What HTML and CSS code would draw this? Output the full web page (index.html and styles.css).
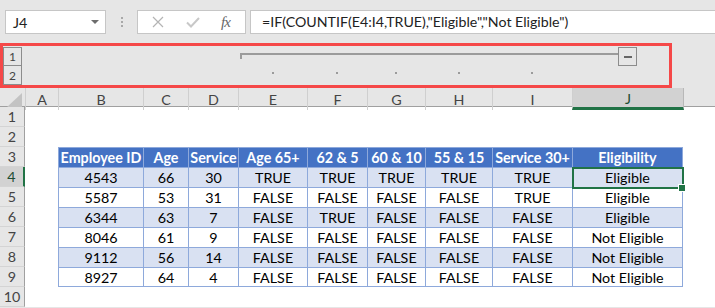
FILE: index.html
```html
<!DOCTYPE html>
<html lang="en">

<head>
    <meta charset="UTF-8" />
    <meta name="viewport" content="width=device-width, initial-scale=1.0" />
    <title>Eligibility - Excel</title>
    <link rel="stylesheet" href="styles.css">
</head>

<body>
    <div class="app">
        <div class="formula-bar">
            <div class="name-box">
                <span>J4</span>
                <svg class="caret" width="8" height="4" viewBox="0 0 8 4">
                    <path d="M0 0 L8 0 L4 4 Z" fill="#6d6d6d" />
                </svg>
            </div>
            <div class="grip"><i></i><i></i><i></i></div>
            <div class="fx-buttons">
                <svg width="12" height="12" viewBox="0 0 12 12">
                    <path d="M1 1 L11 11 M11 1 L1 11" stroke="#b4b4b4" stroke-width="1.2" fill="none" />
                </svg>
                <svg width="14" height="11" viewBox="0 0 14 11">
                    <path d="M1 5.5 L5 9.5 L13 1" stroke="#c8c8c8" stroke-width="2" fill="none" />
                </svg>
                <span class="fx">fx</span>
            </div>
            <div class="formula">=IF(COUNTIF(E4:I4,TRUE),"Eligible","Not Eligible")</div>
        </div>

        <div class="outline">
            <div class="level">1</div>
            <div class="bracket">
                <div class="bracket-line"></div>
                <div class="collapse"><i></i></div>
            </div>
            <div class="level">2</div>
            <div class="dot c-e"></div>
            <div class="dot c-f"></div>
            <div class="dot c-g"></div>
            <div class="dot c-h"></div>
            <div class="dot c-i"></div>
            <div class="annotation"></div>
        </div>

        <div class="sheet">
            <div class="row col-head">
                <div class="corner"><svg width="16" height="15" viewBox="0 0 16 15"><path d="M16 0 L16 15 L0 15 Z" fill="#c3c3c3" /></svg></div>
                <div>A</div><div>B</div><div>C</div><div>D</div><div>E</div>
                <div>F</div><div>G</div><div>H</div><div>I</div><div class="active">J</div><div class="rest"></div>
            </div>

            <div class="row"><div class="rh">1</div></div>
            <div class="row"><div class="rh">2</div></div>

            <div class="row">
                <div class="rh">3</div><div></div>
                <div class="th">Employee ID</div><div class="th">Age</div><div class="th">Service</div>
                <div class="th">Age 65+</div><div class="th">62 &amp; 5</div><div class="th">60 &amp; 10</div>
                <div class="th">55 &amp; 15</div><div class="th">Service 30+</div><div class="th last">Eligibility</div>
            </div>

            <div class="row band">
                <div class="rh active">4</div><div></div>
                <div class="td">4543</div><div class="td">66</div><div class="td">30</div>
                <div class="td">TRUE</div><div class="td">TRUE</div><div class="td">TRUE</div>
                <div class="td">TRUE</div><div class="td">TRUE</div><div class="td last selected">Eligible</div>
            </div>

            <div class="row">
                <div class="rh">5</div><div></div>
                <div class="td">5587</div><div class="td">53</div><div class="td">31</div>
                <div class="td">FALSE</div><div class="td">FALSE</div><div class="td">FALSE</div>
                <div class="td">FALSE</div><div class="td">TRUE</div><div class="td last">Eligible</div>
            </div>

            <div class="row band">
                <div class="rh">6</div><div></div>
                <div class="td">6344</div><div class="td">63</div><div class="td">7</div>
                <div class="td">FALSE</div><div class="td">TRUE</div><div class="td">FALSE</div>
                <div class="td">FALSE</div><div class="td">FALSE</div><div class="td last">Eligible</div>
            </div>

            <div class="row">
                <div class="rh">7</div><div></div>
                <div class="td">8046</div><div class="td">61</div><div class="td">9</div>
                <div class="td">FALSE</div><div class="td">FALSE</div><div class="td">FALSE</div>
                <div class="td">FALSE</div><div class="td">FALSE</div><div class="td last">Not Eligible</div>
            </div>

            <div class="row band">
                <div class="rh">8</div><div></div>
                <div class="td">9112</div><div class="td">56</div><div class="td">14</div>
                <div class="td">FALSE</div><div class="td">FALSE</div><div class="td">FALSE</div>
                <div class="td">FALSE</div><div class="td">FALSE</div><div class="td last">Not Eligible</div>
            </div>

            <div class="row bottom">
                <div class="rh">9</div><div></div>
                <div class="td">8927</div><div class="td">64</div><div class="td">4</div>
                <div class="td">FALSE</div><div class="td">FALSE</div><div class="td">FALSE</div>
                <div class="td">FALSE</div><div class="td">FALSE</div><div class="td last">Not Eligible</div>
            </div>

            <div class="row"><div class="rh">10</div></div>
        </div>
    </div>
</body>

</html>
```

FILE: styles.css
```css
:root {
    --cols: 25px 33px 85px 45px 50px 69px 60px 58px 67px 80px 112px 1fr;
    --chrome: #e6e6e6;
    --line: #c6c6c6;
    --green: #217346;
    --blue: #4472c4;
    --blue-line: #8ea9db;
    --band: #d9e1f2;
}

* {
    box-sizing: border-box;
    margin: 0;
    padding: 0;
}

body {
    width: 715px;
    height: 308px;
    overflow: hidden;
    font-family: Lato, "Liberation Sans", sans-serif;
    font-size: 14.3px;
    color: #000;
    background: var(--chrome);
}

/* formula bar */
.formula-bar {
    height: 43px;
    display: flex;
    align-items: flex-start;
    padding-top: 10px;
}

.name-box {
    margin-left: 5px;
    width: 101px;
    height: 24px;
    background: white;
    border: 1px solid var(--line);
    display: flex;
    align-items: center;
    justify-content: space-between;
    padding: 0 6px 0 7px;
    font-size: 14.3px;
    color: #222;
}

.grip {
    width: 31px;
    height: 24px;
    display: flex;
    flex-direction: column;
    align-items: center;
    justify-content: center;
    gap: 2px;
}

.grip i {
    width: 2px;
    height: 2px;
    background: #a8a8a8;
}

.fx-buttons {
    width: 109px;
    height: 24px;
    background: white;
    border: 1px solid var(--line);
    display: flex;
    align-items: center;
    padding-left: 14px;
    gap: 22px;
}

.fx {
    font-family: "Liberation Serif", serif;
    font-style: italic;
    font-size: 15px;
    color: #666;
    margin-left: -1px;
    letter-spacing: -1px;
}

.formula {
    flex: 1;
    margin-left: 4px;
    height: 24px;
    background: white;
    border: 1px solid var(--line);
    border-right: 0;
    padding-left: 11px;
    line-height: 22px;
    font-size: 14.2px;
    color: #222;
    white-space: nowrap;
}

/* outline levels */
.outline {
    position: relative;
    height: 45px;
    padding-top: 4px;
    display: grid;
    grid-template-columns: var(--cols);
    grid-template-rows: 19px 19px;
}

.level {
    grid-column: 1;
    margin-left: 3px;
    width: 19px;
    height: 19px;
    border: 1px solid #8c8c8c;
    font-size: 12px;
    color: #444;
    display: flex;
    align-items: center;
    justify-content: center;
}

.level + .bracket + .level {
    margin-top: -1px;
    height: 20px;
}

.bracket {
    grid-column: 6 / 12;
    display: flex;
    margin: 0 47px 0 2px;
}

.bracket-line {
    flex: 1;
    height: 6px;
    margin-top: 6px;
    border-top: 2px solid #9b9b9b;
    border-left: 2px solid #9b9b9b;
}

.collapse {
    width: 19px;
    height: 19px;
    border: 1px solid #8c8c8c;
    display: flex;
    align-items: center;
    justify-content: center;
}

.collapse i {
    width: 8px;
    height: 2px;
    background: #666;
}

.dot {
    grid-row: 2;
    justify-self: center;
    width: 2px;
    height: 2px;
    margin-top: 6px;
    background: #9b9b9b;
}

.c-e { grid-column: 6; }
.c-f { grid-column: 7; }
.c-g { grid-column: 8; }
.c-h { grid-column: 9; }
.c-i { grid-column: 10; }

.annotation {
    position: absolute;
    top: 0;
    left: 0;
    width: 672px;
    height: 45px;
    border: 3px solid #f54848;
}

/* sheet */
.sheet {
    background: white;
}

.row {
    display: grid;
    grid-template-columns: var(--cols);
    height: 20px;
}

.col-head {
    height: 19px;
    background: var(--chrome);
    border-bottom: 1px solid #a0a0a0;
}

.col-head div {
    display: flex;
    align-items: center;
    justify-content: center;
    border-left: 1px solid #cfcfcf;
    color: #444;
}

.col-head .corner {
    border-left: 0;
    justify-content: flex-end;
    align-items: flex-end;
    padding: 0 3px 2px 0;
}

.col-head .active {
    background: #d2d2d2;
    border-bottom: 3px solid var(--green);
    border-right: 1px solid #b8b8b8;
    color: #1d4d33;
    padding-top: 2px;
}

.col-head .rest {
    border-left: 0;
}

.rh {
    background: var(--chrome);
    border-right: 1px solid #a0a0a0;
    border-bottom: 1px solid #d4d4d4;
    color: #444;
    display: flex;
    align-items: center;
    justify-content: center;
}

.rh.active {
    background: #d2d2d2;
    border-right: 2px solid var(--green);
    color: #1d4d33;
}

.th,
.td {
    border-top: 1px solid var(--blue-line);
    border-left: 1px solid var(--blue-line);
    display: flex;
    align-items: center;
    justify-content: center;
    white-space: nowrap;
}

.th {
    background: var(--blue);
    color: white;
    font-weight: bold;
}

.th.last,
.td.last {
    margin-right: 1px;
    border-right: 1px solid var(--blue-line);
}

.band .td {
    background: var(--band);
}

.bottom .td {
    border-bottom: 1px solid var(--blue-line);
}

.td.selected {
    position: relative;
}

.td.selected::before {
    content: "";
    position: absolute;
    top: -1px;
    left: -1px;
    right: -2px;
    bottom: -2px;
    border: 2px solid var(--green);
}

.td.selected::after {
    content: "";
    position: absolute;
    right: -4px;
    bottom: -5px;
    width: 6px;
    height: 6px;
    background: var(--green);
    border: 1px solid white;
}
```
